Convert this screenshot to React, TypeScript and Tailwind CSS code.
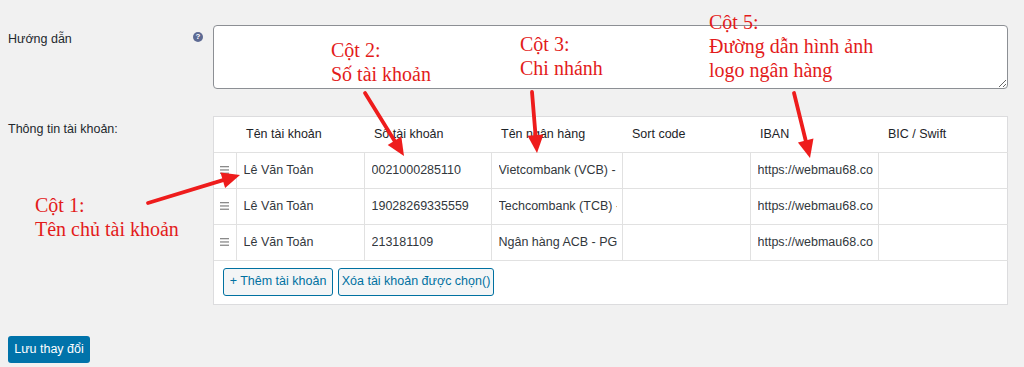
import React from "react";

const ROWS = [
  { name: "Lê Văn Toản", number: "0021000285110", bank: "Vietcombank (VCB) - Chi nhánh Hà Nội", iban: "https://webmau68.com/logo-vcb.png" },
  { name: "Lê Văn Toản", number: "19028269335559", bank: "Techcombank (TCB) - Chi nhánh Hà Nội", iban: "https://webmau68.com/logo-tcb.png" },
  { name: "Lê Văn Toản", number: "213181109", bank: "Ngân hàng ACB - PGD Hà Nội", iban: "https://webmau68.com/logo-acb.png" },
];

const HEADERS = ["Tên tài khoản", "Số tài khoản", "Tên ngân hàng", "Sort code", "IBAN", "BIC / Swift"];
const COL_W = ["w-[128px]", "w-[127px]", "w-[131px]", "w-[128px]", "w-[128px]", "w-[130px]"];

function Arrow({ x1, y1, x2, y2 }: { x1: number; y1: number; x2: number; y2: number }) {
  const dx = x2 - x1;
  const dy = y2 - y1;
  const len = Math.hypot(dx, dy);
  const ux = dx / len;
  const uy = dy / len;
  const hl = 18;
  const hw = 8;
  const bx = x2 - ux * hl;
  const by = y2 - uy * hl;
  const pts = `${x2},${y2} ${bx - uy * hw},${by + ux * hw} ${bx + uy * hw},${by - ux * hw}`;
  return (
    <g>
      <line x1={x1} y1={y1} x2={bx + ux * 2} y2={by + uy * 2} stroke="#ee1c1c" strokeWidth={3.8} strokeLinecap="round" />
      <polygon points={pts} fill="#ee1c1c" />
    </g>
  );
}

function Handle() {
  return (
    <svg width="9" height="8" viewBox="0 0 9 8" className="mx-auto">
      <rect x="0" y="0" width="9" height="1.3" fill="#8a8a8a" />
      <rect x="0" y="3.3" width="9" height="1.3" fill="#8a8a8a" />
      <rect x="0" y="6.6" width="9" height="1.3" fill="#8a8a8a" />
    </svg>
  );
}

export default function App() {
  return (
    <div className="relative h-[367px] w-[1024px] overflow-hidden bg-[#f1f1f1] font-['Liberation_Sans','Noto_Sans',sans-serif] text-[12.5px] text-[#23282d]">
      <div className="pl-2 pt-[25px]">
        {/* Hướng dẫn */}
        <div className="flex">
          <div className="flex w-[205px] items-start justify-between pr-[10px] pt-[5px]">
            <span>Hướng dẫn</span>
            <span className="mt-[2px] flex h-[10px] w-[10px] items-center justify-center rounded-full bg-[#5d6a93] text-[8px] font-bold leading-none text-white">
              ?
            </span>
          </div>
          <textarea className="h-[64px] w-[795px] rounded-[4px] border border-[#8c8f94] bg-white outline-none" />
        </div>

        {/* Thông tin tài khoản */}
        <div className="mt-[27px] flex">
          <div className="w-[205px] pt-[4px]">Thông tin tài khoản:</div>
          <div className="w-[795px] border border-[#dcdcde] bg-white">
            <table className="w-full table-fixed border-collapse">
              <thead>
                <tr className="h-[35px] border-b border-[#e1e1e1]">
                  <th className="w-[22px]" />
                  {HEADERS.map((h, i) => (
                    <th key={h} className={`${COL_W[i]} px-[10px] text-left font-normal text-[#1d2327]`}>
                      {h}
                    </th>
                  ))}
                </tr>
              </thead>
              <tbody>
                {ROWS.map((r, idx) => (
                  <tr key={idx} className="h-[36px] border-b border-[#e1e1e1] text-[#32373c]">
                    <td className="border-r border-[#e1e1e1] align-middle">
                      <Handle />
                    </td>
                    {[r.name, r.number, r.bank, "", r.iban, ""].map((v, j) => (
                      <td key={j} className="border-r border-[#e1e1e1] p-0 last:border-r-0">
                        <div className="ml-[7px] mr-[5px] overflow-hidden whitespace-nowrap">{v}</div>
                      </td>
                    ))}
                  </tr>
                ))}
              </tbody>
            </table>
            <div className="flex h-[43px] items-start gap-[5px] pl-[9px] pt-[7px]">
              <button className="h-[28px] w-[110px] rounded-[3px] border border-[#0071a1] bg-[#f3f5f6] text-[12.5px] text-[#0071a1]">
                + Thêm tài khoản
              </button>
              <button className="h-[28px] w-[156px] rounded-[3px] border border-[#0071a1] bg-[#f3f5f6] text-[12.5px] text-[#0071a1]">
                Xóa tài khoản được chọn()
              </button>
            </div>
          </div>
        </div>

        <button className="mt-[31px] h-[27px] w-[82px] rounded-[3px] bg-[#0073aa] text-[12.5px] text-white">
          Lưu thay đổi
        </button>
      </div>

      {/* annotations */}
      <div className="pointer-events-none absolute inset-0 font-['Liberation_Serif','Noto_Serif',serif] text-[20px] leading-[24px] text-[#e31b1b]">
        <div className="absolute left-[331px] top-[38px]">
          Cột 2:<br />Số tài khoản
        </div>
        <div className="absolute left-[520px] top-[32px]">
          Cột 3:<br />Chi nhánh
        </div>
        <div className="absolute left-[709px] top-[10px]">
          Cột 5:<br />Đường dẫn hình ảnh<br />logo ngân hàng
        </div>
        <div className="absolute left-[35px] top-[193px]">
          Cột 1:<br />Tên chủ tài khoản
        </div>
        <svg className="absolute inset-0" width="1024" height="367">
          <Arrow x1={148} y1={203} x2={240} y2={175} />
          <Arrow x1={365} y1={93} x2={404} y2={156} />
          <Arrow x1={532} y1={92} x2={537} y2={153} />
          <Arrow x1={794} y1={93} x2={810} y2={158} />
        </svg>
      </div>
    </div>
  );
}
